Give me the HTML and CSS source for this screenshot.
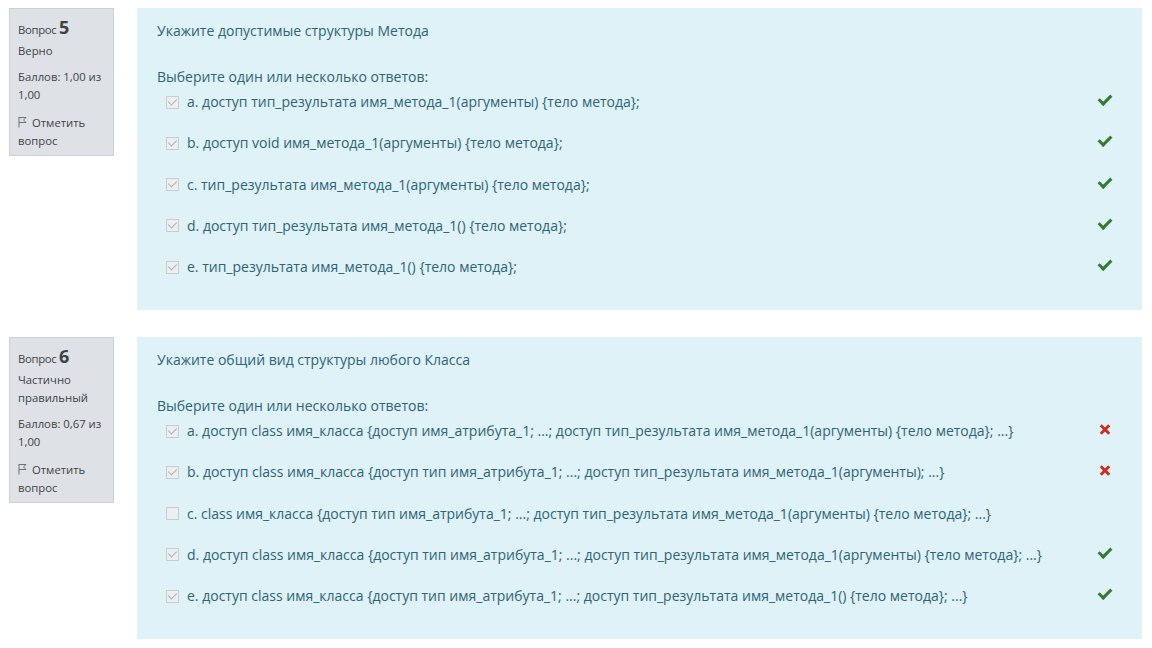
FILE: index.html
```html
<!DOCTYPE html>
<html lang="ru">
<head>
<meta charset="utf-8">
<link rel="stylesheet" href="styles.css">
</head>
<body>
<div class="page">
  <div class="que">
    <div class="info">
      <h3 class="no">Вопрос <span class="qno">5</span></h3>
      <div class="state">Верно</div>
      <div class="grade">Баллов: 1,00 из 1,00</div>
      <div class="flag"><svg class="flagicon" width="9" height="12" viewBox="0 0 9 12"><path d="M1 1 V11.5 M1 1.5 L8 1.5 L5.5 4 L8 6.5 L1 6.5" fill="none" stroke="#6a737b" stroke-width="1"/></svg>Отметить вопрос</div>
    </div>
    <div class="formulation">
      <div class="qtext">Укажите допустимые структуры Метода</div>
      <div class="prompt">Выберите один или несколько ответов:</div>
      <div class="answers">
        <div class="opt"><span class="cb checked"></span><span class="lbl">a. доступ тип_результата имя_метода_1(аргументы) {тело метода};</span><span class="mark ok"></span></div>
        <div class="opt"><span class="cb checked"></span><span class="lbl">b. доступ void имя_метода_1(аргументы) {тело метода};</span><span class="mark ok"></span></div>
        <div class="opt"><span class="cb checked"></span><span class="lbl">c. тип_результата имя_метода_1(аргументы) {тело метода};</span><span class="mark ok"></span></div>
        <div class="opt"><span class="cb checked"></span><span class="lbl">d. доступ тип_результата имя_метода_1() {тело метода};</span><span class="mark ok"></span></div>
        <div class="opt"><span class="cb checked"></span><span class="lbl">e. тип_результата имя_метода_1() {тело метода};</span><span class="mark ok"></span></div>
      </div>
    </div>
  </div>
  <div class="que">
    <div class="info">
      <h3 class="no">Вопрос <span class="qno">6</span></h3>
      <div class="state">Частично правильный</div>
      <div class="grade">Баллов: 0,67 из 1,00</div>
      <div class="flag"><svg class="flagicon" width="9" height="12" viewBox="0 0 9 12"><path d="M1 1 V11.5 M1 1.5 L8 1.5 L5.5 4 L8 6.5 L1 6.5" fill="none" stroke="#6a737b" stroke-width="1"/></svg>Отметить вопрос</div>
    </div>
    <div class="formulation">
      <div class="qtext">Укажите общий вид структуры любого Класса</div>
      <div class="prompt">Выберите один или несколько ответов:</div>
      <div class="answers">
        <div class="opt"><span class="cb checked"></span><span class="lbl">a. доступ class имя_класса {доступ имя_атрибута_1; ...; доступ тип_результата имя_метода_1(аргументы) {тело метода}; ...}</span><span class="mark bad"></span></div>
        <div class="opt"><span class="cb checked"></span><span class="lbl">b. доступ class имя_класса {доступ тип имя_атрибута_1; ...; доступ тип_результата имя_метода_1(аргументы); ...}</span><span class="mark bad"></span></div>
        <div class="opt"><span class="cb"></span><span class="lbl">c. class имя_класса {доступ тип имя_атрибута_1; ...; доступ тип_результата имя_метода_1(аргументы) {тело метода}; ...}</span><span class="mark"></span></div>
        <div class="opt"><span class="cb checked"></span><span class="lbl">d. доступ class имя_класса {доступ тип имя_атрибута_1; ...; доступ тип_результата имя_метода_1(аргументы) {тело метода}; ...}</span><span class="mark ok"></span></div>
        <div class="opt"><span class="cb checked"></span><span class="lbl">e. доступ class имя_класса {доступ тип имя_атрибута_1; ...; доступ тип_результата имя_метода_1() {тело метода}; ...}</span><span class="mark ok"></span></div>
      </div>
    </div>
  </div>
</div>
</body>
</html>
```

FILE: styles.css
```css
* { box-sizing: border-box; }
html, body { margin: 0; padding: 0; background: #fff; }
body {
  font-family: "Open Sans", "Noto Sans", "DejaVu Sans", sans-serif;
  color: #373a3c;
}
.page {
  padding: 8px 10px 0 9px;
  display: flex;
  flex-direction: column;
  gap: 27px;
}
.que {
  display: flex;
  align-items: flex-start;
  gap: 23px;
}
.info {
  width: 105px;
  flex: none;
  background: #dee2e6;
  border: 1px solid #cad0d7;
  padding: 7px 6px 5px 8px;
  font-size: 11.3px;
  line-height: 18px;
  color: #3d4246;
}
.no {
  margin: 0 0 4px;
  font-weight: normal;
  font-size: 11.3px;
  line-height: 22px;
  height: 22px;
  letter-spacing: -0.3px;
}
.qno {
  font-size: 18px;
  font-weight: bold;
  letter-spacing: 0;
}
.state { margin-bottom: 8px; }
.grade { margin-bottom: 10px; }
.flagicon { vertical-align: -1px; margin-right: 5px; }
.formulation {
  flex: 1;
  height: 302px;
  background: #def2f8;
  color: #2f6473;
  padding: 13px 30px 0 20px;
  font-size: 14px;
  line-height: 20px;
}
.qtext { margin-bottom: 26px; }
.prompt { margin-bottom: 5px; }
.answers {
  display: flex;
  flex-direction: column;
  gap: 21.25px;
  padding-left: 9px;
}
.opt {
  display: flex;
  align-items: center;
  height: 20px;
}
.cb {
  width: 13px;
  height: 13px;
  flex: none;
  border: 1px solid #c9cdd0;
  background: #eceeef;
  margin-right: 8px;
  position: relative;
}
.cb.checked::after {
  content: "";
  position: absolute;
  left: 3px;
  top: 0px;
  width: 4px;
  height: 7px;
  border-right: 1.5px solid #a9b0b4;
  border-bottom: 1.5px solid #a9b0b4;
  transform: rotate(45deg);
}
.lbl { flex: 1; white-space: nowrap; }
.mark {
  width: 14px;
  height: 12px;
  flex: none;
  position: relative;
  top: -2px;
}
.mark.ok::after {
  content: "";
  position: absolute;
  left: 3px;
  top: -2px;
  width: 5px;
  height: 10px;
  border-right: 3px solid #357a32;
  border-bottom: 3px solid #357a32;
  transform: rotate(45deg);
}
.mark.bad::before, .mark.bad::after {
  content: "";
  position: absolute;
  left: 1px;
  top: 5px;
  width: 12px;
  height: 3px;
  background: #ca3120;
  transform: rotate(45deg);
}
.mark.bad::after { transform: rotate(-45deg); }
```
